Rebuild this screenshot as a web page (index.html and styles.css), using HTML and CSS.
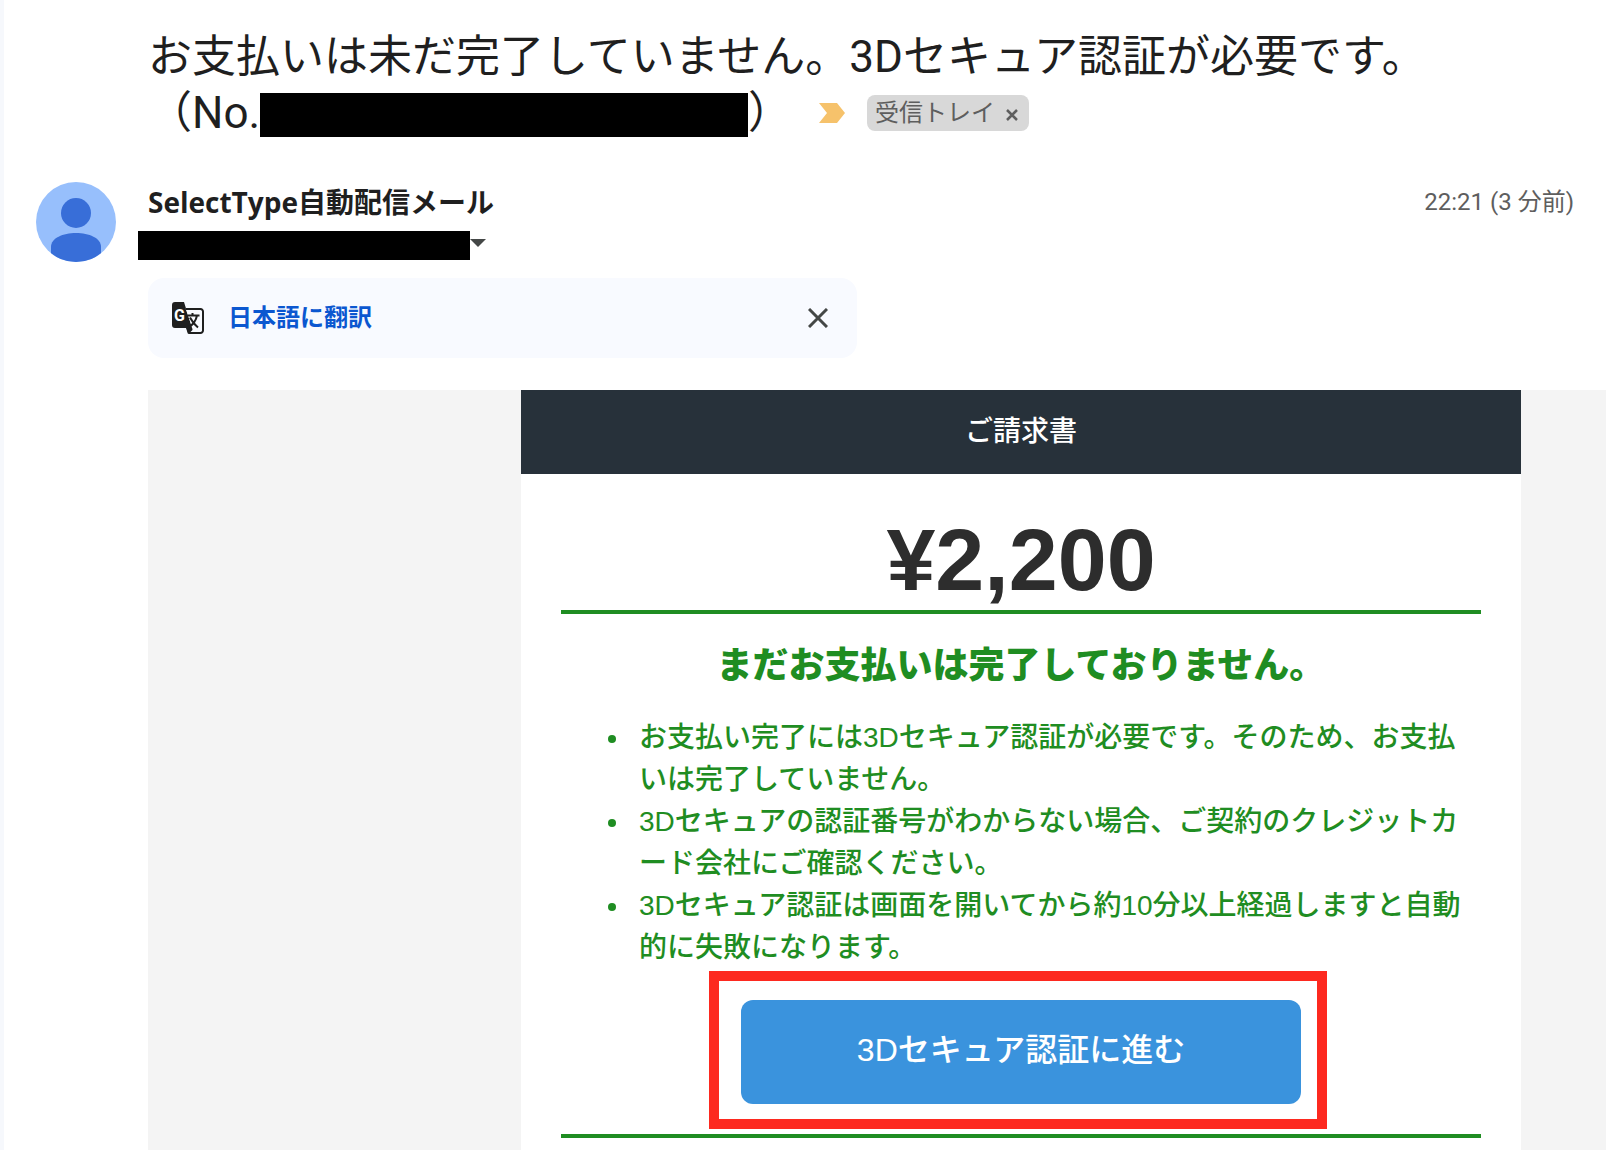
FILE: index.html
```html
<!DOCTYPE html>
<html lang="ja">
<head>
    <meta charset="UTF-8">
    <meta name="viewport" content="width=device-width, initial-scale=1.0">
    <title>お支払いは未だ完了していません。</title>
    <link rel="stylesheet" href="styles.css">
</head>
<body>
    <main class="mail">
        <header class="subject">
            <h1>お支払いは未だ完了していません。3Dセキュア認証が必要です。</h1>
            <div class="subject-rest">
                <span>（No.</span>
                <span class="redacted-number"></span>
                <span>）</span>
                <svg class="important" viewBox="0 0 26 20" aria-hidden="true"><path d="M0 0h18l8 10-8 10H0l8-10z" fill="#f6c26b"/></svg>
                <span class="tag">受信トレイ
                    <button type="button" class="tag-remove" aria-label="ラベルを削除">
                        <svg viewBox="0 0 14 14"><path d="M2 2l10 10M12 2L2 12" stroke="#5e5e5e" stroke-width="2.500"/></svg>
                    </button>
                </span>
            </div>
        </header>

        <section class="sender">
            <svg class="avatar" viewBox="0 0 80 80" aria-hidden="true">
                <defs><clipPath id="circle"><circle cx="40" cy="40" r="40"/></clipPath></defs>
                <g clip-path="url(#circle)">
                    <rect width="80" height="80" fill="#97bffc"/>
                    <circle cx="40" cy="31" r="15" fill="#386ed8"/>
                    <path d="M15 80V65c0-9 12-14 25-14s25 5 25 14v15z" fill="#386ed8"/>
                </g>
            </svg>
            <div class="sender-info">
                <h2>SelectType自動配信メール</h2>
                <div class="recipient">
                    <span class="redacted-address"></span>
                    <button type="button" class="details" aria-label="詳細を表示"></button>
                </div>
            </div>
            <time class="date">22:21 (3 分前)</time>
        </section>

        <div class="translate">
            <svg class="translate-icon" viewBox="0 0 32 32" aria-hidden="true">
                <path d="M3 0h9l9 29-5 3-2-6H3a3 3 0 0 1-3-3V3a3 3 0 0 1 3-3z" fill="#1f1f1f"/>
                <path d="M13.500 6.500H32v25H17l4-4z" fill="#f8faff"/>
                <path d="M13.500 7H28.500a2.500 2.500 0 0 1 2.500 2.500v19a2.500 2.500 0 0 1-2.500 2.500H16.500" fill="none" stroke="#1f1f1f" stroke-width="2"/>
                <path d="M14.500 26l1.500 5 4.500-5z" fill="#1f1f1f"/>
                <path d="M15.500 13.500h12M20.500 11v2.500M25 13.500c-1 5-4 9-8 11.500M18 15.500c2 4 5 7.500 8 10" fill="none" stroke="#1f1f1f" stroke-width="2"/>
                <text x="2" y="19" class="translate-g">G</text>
            </svg>
            <a href="#" class="translate-link">日本語に翻訳</a>
            <button type="button" class="close" aria-label="閉じる">
                <svg viewBox="0 0 20 20"><path d="M1 1l18 18M19 1L1 19" stroke="#444746" stroke-width="3"/></svg>
            </button>
        </div>

        <div class="content">
            <article class="invoice">
                <h3 class="invoice-title">ご請求書</h3>
                <div class="invoice-body">
                    <p class="price">¥2,200</p>
                    <div class="notice">
                        <h4>まだお支払いは完了しておりません。</h4>
                        <ul>
                            <li>お支払い完了には3Dセキュア認証が必要です。そのため、お支払いは完了していません。</li>
                            <li>3Dセキュアの認証番号がわからない場合、ご契約のクレジットカード会社にご確認ください。</li>
                            <li>3Dセキュア認証は画面を開いてから約10分以上経過しますと自動的に失敗になります。</li>
                        </ul>
                        <div class="action">
                            <a href="#">3Dセキュア認証に進む</a>
                        </div>
                    </div>
                </div>
            </article>
        </div>
    </main>
</body>
</html>
```

FILE: styles.css
```css
*{
    box-sizing: border-box;
}

body{
    margin: 0;
    background: #fff;
    color: #1f1f1f;
    font-family: Roboto, "Noto Sans CJK JP", sans-serif;
}

h1, h2, h3, h4, p, ul{
    margin: 0;
}

button{
    padding: 0;
    border: 0;
    background: none;
}

svg{
    display: block;
}

.mail{
    display: flex;
    flex-direction: column;
    min-height: 100vh;
    padding-left: 144px;
    border-left: 4px solid #f6f8fc;
}

/* Subject line */
.subject{
    padding-top: 29px;
    font-size: 44px;
    line-height: 56px;
}

h1{
    font-size: 44px;
    font-weight: 400;
}

.subject-rest{
    display: flex;
    align-items: center;
}

.redacted-number, .redacted-address{
    background: #000;
}

.redacted-number{
    width: 488px;
    height: 44px;
    margin-top: 4px;
}

.important{
    width: 26px;
    height: 20px;
    margin: 0 22px 0 27px;
}

.tag{
    display: flex;
    align-items: center;
    gap: 10px;
    height: 36px;
    padding: 0 10px 0 8px;
    border-radius: 8px;
    background: #d8d8d8;
    color: #5e5e5e;
    font-size: 24px;
    line-height: 36px;
}

.tag-remove, .tag-remove svg{
    width: 14px;
    height: 14px;
}

.tag-remove{
    margin-top: 4px;
}

/* Sender */
.sender{
    display: flex;
    align-items: flex-start;
    margin: 41px 32px 0 -112px;
}

.avatar{
    width: 80px;
    height: 80px;
}

.sender-info{
    flex: 1;
    margin-left: 32px;
}

h2{
    font-family: "Open Sans", "Noto Sans CJK JP", sans-serif;
    font-size: 28px;
    font-weight: 700;
    line-height: 40px;
}

.recipient{
    display: flex;
    margin: 9px 0 0 -10px;
}

.redacted-address{
    width: 332px;
    height: 29px;
}

.details{
    align-self: flex-start;
    margin-top: 8px;
    border: 8px solid transparent;
    border-top-color: #444746;
    border-bottom: 0;
}

.date{
    color: #5e5e5e;
    font-size: 24px;
    line-height: 40px;
}

/* Translate bar */
.translate{
    display: flex;
    align-items: center;
    width: 709px;
    max-width: 100%;
    height: 80px;
    margin-top: 16px;
    padding: 0 29px 0 24px;
    border-radius: 16px;
    background: #f8faff;
}

.translate-icon{
    width: 32px;
    height: 32px;
}

.translate-g{
    font: 700 16px Roboto, sans-serif;
    fill: #fff;
}

.translate-link{
    flex: 1;
    margin-left: 24px;
    color: #0b57d0;
    font-size: 24px;
    font-weight: 600;
    line-height: 36px;
    text-decoration: none;
}

.close, .close svg{
    width: 20px;
    height: 20px;
}

/* Mail content */
.content{
    flex: 1;
    display: flex;
    justify-content: flex-end;
    margin-top: 32px;
    padding-right: 85px;
    background: #f4f4f4;
    font-family: "Liberation Sans", "Noto Sans CJK JP", sans-serif;
}

.invoice{
    width: 1000px;
    background: #fff;
}

.invoice-title{
    background: #27313a;
    color: #fff;
    font-size: 28px;
    font-weight: 500;
    line-height: 84px;
    text-align: center;
}

.invoice-body{
    padding: 36px 40px 12px;
}

.price{
    color: #2d2d2d;
    font-size: 88px;
    font-weight: 700;
    line-height: 100px;
    text-align: center;
}

.notice{
    border-top: 4px solid #1f8d22;
    border-bottom: 4px solid #1f8d22;
    color: #1f8d22;
}

h4{
    padding: 24px 0 23px;
    font-size: 36px;
    font-weight: 900;
    line-height: 56px;
    text-align: center;
}

ul{
    padding-left: 70px;
    font-size: 28px;
    font-weight: 500;
    line-height: 42px;
    line-break: loose;
}

li{
    padding-left: 8px;
}

.action{
    position: relative;
    width: 560px;
    margin: 31px auto 30px;
}

.action a{
    display: block;
    padding-bottom: 4px;
    border-radius: 12px;
    background: #3a93dd;
    color: #fff;
    font-size: 32px;
    font-weight: 500;
    line-height: 100px;
    text-align: center;
    text-decoration: none;
}

/* red frame around the button */
.action::after{
    content: "";
    position: absolute;
    inset: -29px -26px -25px -32px;
    border: 10px solid #fd291f;
    pointer-events: none;
}
```
